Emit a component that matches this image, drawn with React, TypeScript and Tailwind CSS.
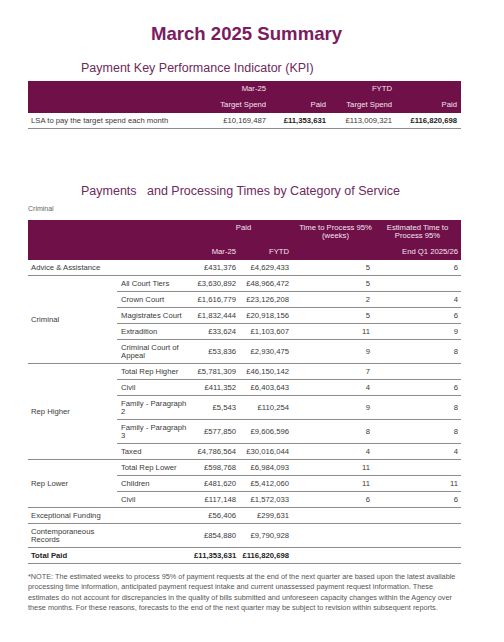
import React from 'react';

type Row = {
  label: string;
  mar: string;
  fytd: string;
  time?: string;
  est?: string;
  tall?: boolean;
  bold?: boolean;
};

type Group = { name?: string; rows: Row[] };

const groups: Group[] = [
  { rows: [{ label: 'Advice & Assistance', mar: '£431,376', fytd: '£4,629,433', time: '5', est: '6' }] },
  {
    name: 'Criminal',
    rows: [
      { label: 'All Court Tiers', mar: '£3,630,892', fytd: '£48,966,472', time: '5' },
      { label: 'Crown Court', mar: '£1,616,779', fytd: '£23,126,208', time: '2', est: '4' },
      { label: 'Magistrates Court', mar: '£1,832,444', fytd: '£20,918,156', time: '5', est: '6' },
      { label: 'Extradition', mar: '£33,624', fytd: '£1,103,607', time: '11', est: '9' },
      { label: 'Criminal Court of Appeal', mar: '£53,836', fytd: '£2,930,475', time: '9', est: '8', tall: true },
    ],
  },
  {
    name: 'Rep Higher',
    rows: [
      { label: 'Total Rep Higher', mar: '£5,781,309', fytd: '£46,150,142', time: '7' },
      { label: 'Civil', mar: '£411,352', fytd: '£6,403,643', time: '4', est: '6' },
      { label: 'Family - Paragraph 2', mar: '£5,543', fytd: '£110,254', time: '9', est: '8', tall: true },
      { label: 'Family - Paragraph 3', mar: '£577,850', fytd: '£9,606,596', time: '8', est: '8', tall: true },
      { label: 'Taxed', mar: '£4,786,564', fytd: '£30,016,044', time: '4', est: '4' },
    ],
  },
  {
    name: 'Rep Lower',
    rows: [
      { label: 'Total Rep Lower', mar: '£598,768', fytd: '£6,984,093', time: '11' },
      { label: 'Children', mar: '£481,620', fytd: '£5,412,060', time: '11', est: '11' },
      { label: 'Civil', mar: '£117,148', fytd: '£1,572,033', time: '6', est: '6' },
    ],
  },
  { rows: [{ label: 'Exceptional Funding', mar: '£56,406', fytd: '£299,631' }] },
  { rows: [{ label: 'Contemporaneous Records', mar: '£854,880', fytd: '£9,790,928', tall: true }] },
  { rows: [{ label: 'Total Paid', mar: '£11,353,631', fytd: '£116,820,698', bold: true }] },
];

const line = 'border-b border-[#8c8c8c]';

export default function App() {
  return (
    <div className="w-[504px] h-[642px] bg-white font-['Liberation_Sans',Arial,sans-serif] text-[#3a3a3a] overflow-hidden">
      <div className="ml-[28px] w-[433px]">
        <h1 className="pt-[23px] pl-[4px] text-center text-[18.6px] leading-[22px] font-bold text-[#7b1b60]">
          March 2025 Summary
        </h1>

        <h2 className="mt-[16px] ml-[53px] text-[12.5px] leading-[15px] text-[#6e2a5c]">
          Payment Key Performance Indicator (KPI)
        </h2>

        {/* KPI table */}
        <table className="mt-[5px] w-[433px] table-fixed border-separate border-spacing-0 text-[7.7px] leading-[8px]">
          <colgroup>
            <col className="w-[182px]" />
            <col className="w-[60px]" />
            <col className="w-[60px]" />
            <col className="w-[66px]" />
            <col className="w-[65px]" />
          </colgroup>
          <thead className="bg-[#6f1048] text-[#f3e4ee]">
            <tr>
              <th className="h-[16px] p-0 font-normal"></th>
              <th className="h-[16px] pr-[4px] text-right font-normal">Mar-25</th>
              <th className="h-[16px] p-0 font-normal"></th>
              <th className="h-[16px] pr-[4px] text-right font-normal">FYTD</th>
              <th className="h-[16px] p-0 font-normal"></th>
            </tr>
            <tr>
              <th className="h-[16px] p-0 font-normal"></th>
              <th className="h-[16px] pr-[4px] text-right font-normal">Target Spend</th>
              <th className="h-[16px] pr-[4px] text-right font-normal">Paid</th>
              <th className="h-[16px] pr-[4px] text-right font-normal">Target Spend</th>
              <th className="h-[16px] pr-[4px] text-right font-normal">Paid</th>
            </tr>
          </thead>
          <tbody>
            <tr>
              <td className={`h-[16px] pl-[3px] ${line}`}>LSA to pay the target spend each month</td>
              <td className={`h-[16px] pr-[4px] text-right ${line}`}>£10,169,487</td>
              <td className={`h-[16px] pr-[4px] text-right font-bold text-[#222] ${line}`}>£11,353,631</td>
              <td className={`h-[16px] pr-[4px] text-right ${line}`}>£113,009,321</td>
              <td className={`h-[16px] pr-[4px] text-right font-bold text-[#222] ${line}`}>£116,820,698</td>
            </tr>
          </tbody>
        </table>

        <h2 className="mt-[55px] ml-[53px] whitespace-pre text-[12.5px] leading-[15px] text-[#6e2a5c]">
          {'Payments   and Processing Times by Category of Service'}
        </h2>
        <p className="mt-[5px] text-[7px] leading-[9px] text-[#666]">Criminal</p>

        {/* Category table */}
        <table className="mt-[7px] w-[433px] table-fixed border-separate border-spacing-0 text-[7.7px] leading-[8px]">
          <colgroup>
            <col className="w-[89px]" />
            <col className="w-[77px]" />
            <col className="w-[46px]" />
            <col className="w-[53px]" />
            <col className="w-[85px]" />
            <col className="w-[83px]" />
          </colgroup>
          <thead className="bg-[#6f1048] text-[#f3e4ee]">
            <tr>
              <th className="h-[24px] p-0 font-normal"></th>
              <th className="h-[24px] p-0 font-normal"></th>
              <th colSpan={2} className="h-[24px] pt-[4px] align-top text-center font-normal">Paid</th>
              <th className="h-[24px] pt-[4px] align-top text-center font-normal">
                Time to Process 95%
                <br />
                (weeks)
              </th>
              <th className="h-[24px] pt-[4px] pr-[4px] align-top text-center font-normal">
                Estimated Time to
                <br />
                Process 95%
              </th>
            </tr>
            <tr>
              <th className="h-[16px] p-0 font-normal"></th>
              <th className="h-[16px] p-0 font-normal"></th>
              <th className="h-[16px] pr-[4px] text-right font-normal">Mar-25</th>
              <th className="h-[16px] pr-[4px] text-right font-normal">FYTD</th>
              <th className="h-[16px] p-0 font-normal"></th>
              <th className="h-[16px] pr-[3px] text-right font-normal">End Q1 2025/26</th>
            </tr>
          </thead>
          <tbody>
            {groups.map((g, gi) =>
              g.rows.map((r, ri) => {
                const h = r.tall ? 'h-[24px]' : 'h-[16px]';
                const weight = r.bold ? 'font-bold text-[#222]' : '';
                return (
                  <tr key={`${gi}-${ri}`} className={weight}>
                    {g.name ? (
                      ri === 0 && (
                        <td rowSpan={g.rows.length} className={`pl-[3px] align-middle ${line}`}>
                          {g.name}
                        </td>
                      )
                    ) : (
                      <td className={`${h} pl-[3px] pr-[2px] align-middle ${line}`}>{r.label}</td>
                    )}
                    {g.name ? (
                      <td className={`${h} pl-[4px] pr-[4px] align-middle ${line}`}>{r.label}</td>
                    ) : (
                      <td className={`${h} ${line}`}></td>
                    )}
                    <td className={`${h} pr-[4px] text-right align-middle ${line}`}>{r.mar}</td>
                    <td className={`${h} pr-[4px] text-right align-middle ${line}`}>{r.fytd}</td>
                    <td className={`${h} pr-[8px] text-right align-middle ${line}`}>{r.time}</td>
                    <td className={`${h} pr-[3px] text-right align-middle ${line}`}>{r.est}</td>
                  </tr>
                );
              })
            )}
          </tbody>
        </table>

        <div className="mt-[8px] whitespace-nowrap text-[7.3px] leading-[10.4px] text-[#555]">
          <p>*NOTE: The estimated weeks to process 95% of payment requests at the end of the next quarter are based upon the latest available</p>
          <p>processing time information, anticipated payment request intake and current unassessed payment request information. These</p>
          <p>estimates do not account for discrepancies in the quality of bills submitted and unforeseen capacity changes within the Agency over</p>
          <p>these months. For these reasons, forecasts to the end of the next quarter may be subject to revision within subsequent reports.</p>
        </div>
      </div>
    </div>
  );
}
